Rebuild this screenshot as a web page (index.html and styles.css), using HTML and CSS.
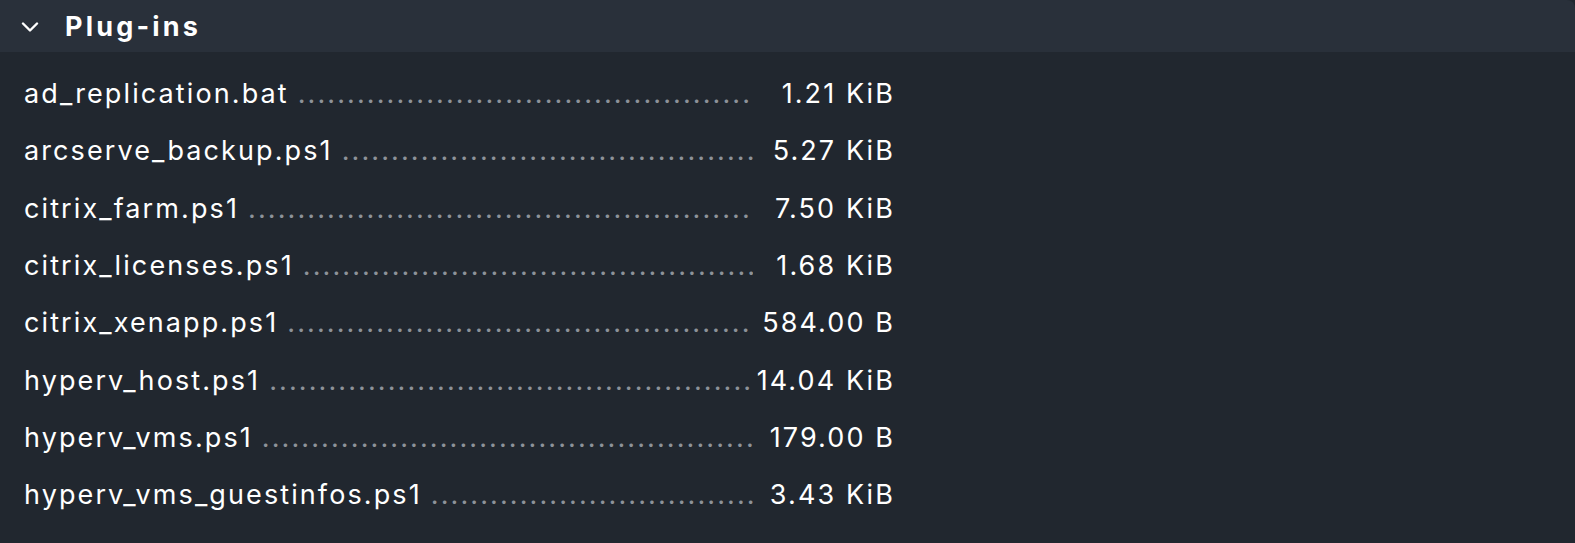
FILE: index.html
```html
<!DOCTYPE html>
<html lang="en">
	<head>
		<meta charset="UTF-8">
		<title>Plug-ins</title>
		<link rel="stylesheet" href="styles.css">
	</head>
	<body>
		<div class="foldable">
			<div class="foldHeader">
				<svg class="chevron" width="18" height="10" viewBox="0 0 18 10">
					<path d="M2 1.5 L9 8.5 L16 1.5" fill="none" stroke="#ffffff" stroke-width="2.4" stroke-linecap="round" stroke-linejoin="round"/>
				</svg>
				<span class="foldTitle">Plug-ins</span>
			</div>
			<div class="foldBody">
				<ul id="fileList"></ul>
			</div>
		</div>
		<script>
(function(){
	const files = [
		['ad_replication.bat', '1.21 KiB'],
		['arcserve_backup.ps1', '5.27 KiB'],
		['citrix_farm.ps1', '7.50 KiB'],
		['citrix_licenses.ps1', '1.68 KiB'],
		['citrix_xenapp.ps1', '584.00 B'],
		['hyperv_host.ps1', '14.04 KiB'],
		['hyperv_vms.ps1', '179.00 B'],
		['hyperv_vms_guestinfos.ps1', '3.43 KiB']
	];
	const list = document.getElementById('fileList');
	const dots = '.'.repeat(120);
	for(let i in files) {
		let el = document.createElement('li');
		el.innerHTML = '<span class="name">' + files[i][0] + '</span><span class="dots">' + dots + '</span>' +
			'<span class="size">' + files[i][1] + '</span>';
		list.appendChild(el);
	}
})();
		</script>
	</body>
</html>
```

FILE: styles.css
```css
html, body {
	margin: 0;
	padding: 0;
	background-color: #21272f;
}
body {
	font-family: Inter, "Noto Sans", sans-serif;
	color: #ffffff;
	width: 1575px;
	height: 543px;
	overflow: hidden;
}
.foldable {
	background-color: #21272f;
}
.foldHeader {
	height: 52px;
	background-color: #29303a;
	display: flex;
	align-items: center;
	padding-left: 21px;
	border-top-right-radius: 8px;
}
.chevron {
	margin-right: 26px;
	margin-top: 2px;
}
.foldTitle {
	font-size: 27px;
	font-weight: 700;
	letter-spacing: 3.2px;
}
.foldBody {
	padding: 13px 0 0 24px;
}
#fileList {
	list-style-type: none;
	margin: 0;
	padding: 0;
	width: 871px;
}
#fileList li {
	display: flex;
	align-items: center;
	height: 57.3px;
	font-size: 27px;
	letter-spacing: 2.1px;
	white-space: nowrap;
}
.name {
	flex: none;
	padding-right: 9px;
}
.dots {
	flex: 1;
	overflow: hidden;
	color: #8d9299;
}
.size {
	flex: none;
	width: 142px;
	text-align: right;
}
```
